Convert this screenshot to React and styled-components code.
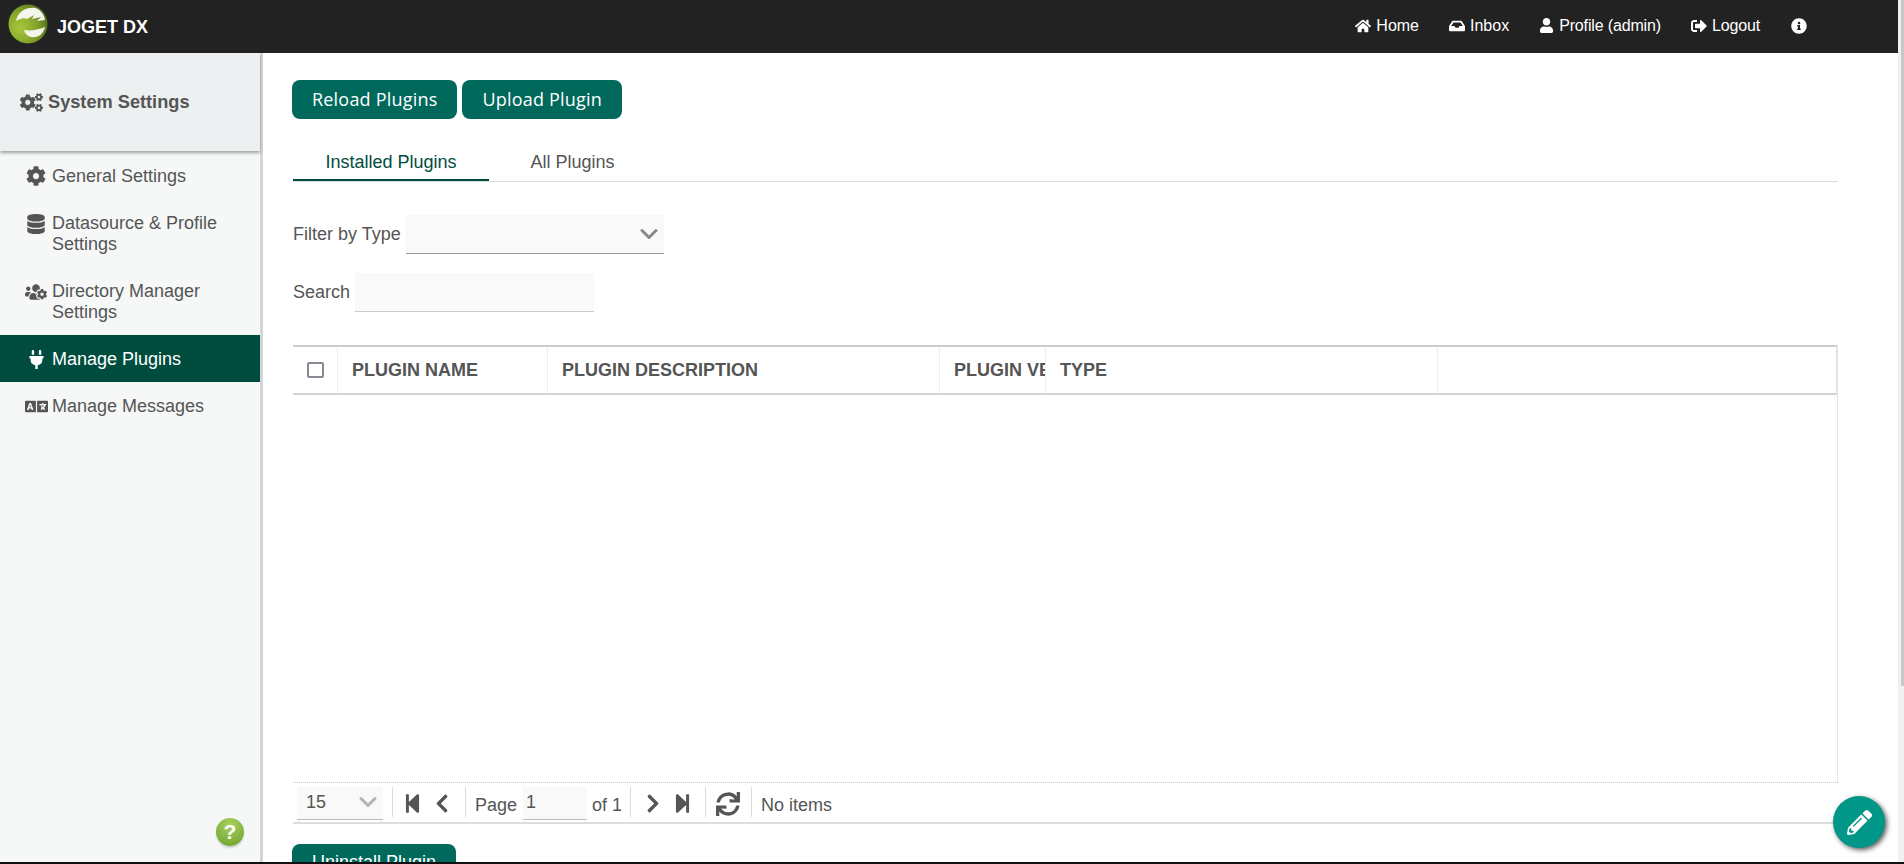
import React from 'react';
import styled, { createGlobalStyle } from 'styled-components';
import {
  FaCogs, FaCog, FaDatabase, FaUsersCog, FaPlug, FaLanguage, FaHome, FaInbox, FaUser,
  FaSignOutAlt, FaInfoCircle, FaPencilAlt, FaStepBackward, FaStepForward, FaChevronLeft,
  FaChevronRight, FaSync,
} from 'react-icons/fa';
import { FiChevronDown } from 'react-icons/fi';

const GlobalStyle = createGlobalStyle`
  html, body { margin: 0; height: 100%; overflow: hidden; background: #fff; }
  * { box-sizing: border-box; }
  body { font-family: 'Liberation Sans', Arial, sans-serif; color: #555; }
`;

const Page = styled.div`
  height: 864px;
  display: flex;
  flex-direction: column;
  border-bottom: 2px solid #111;
  overflow: hidden;
`;

const Viewport = styled.div`
  flex: 1;
  min-height: 0;
  display: flex;
`;

const Column = styled.div`
  flex: 1;
  min-width: 0;
  display: flex;
  flex-direction: column;
`;

const ScrollTrack = styled.div`
  width: 6px;
  background: #f0f0f0;
`;

const ScrollThumb = styled.div`
  width: 3px;
  height: 686px;
  margin-left: 3px;
  background: #c8c8c8;
`;

const TopBar = styled.header`
  height: 53px;
  flex: none;
  background: #222;
  display: flex;
  align-items: center;
  color: #fff;
  padding: 0 0 0 8px;
`;

const LogoWrap = styled.span`
  display: flex;
  margin-top: -6px;
`;

const BrandName = styled.span`
  font-size: 18px;
  font-weight: 700;
  margin-left: 9px;
  position: relative;
  top: 1px;
`;

const TopNav = styled.nav`
  margin-left: auto;
  margin-right: 91px;
  display: flex;
  align-items: center;
  height: 100%;
  position: relative;
  top: -1px;
`;

const TopLink = styled.a`
  display: flex;
  align-items: center;
  gap: 5px;
  font-size: 16px;
  color: #fff;
  margin-left: ${({ $gap }) => $gap}px;
  letter-spacing: ${({ $tight }) => ($tight ? '-0.15px' : '0')};
  svg { font-size: ${({ $icon }) => $icon || 16}px; }
`;

const Body = styled.div`
  flex: 1;
  min-height: 0;
  display: flex;
`;

const Sidebar = styled.aside`
  width: 263px;
  flex: none;
  background: #f6f8f8;
  border-right: 3px solid #d4d6d6;
  position: relative;
`;

const SideHead = styled.div`
  height: 98px;
  background: #ecf0f1;
  box-shadow: 0 2px 3px rgba(0, 0, 0, 0.35);
  display: flex;
  align-items: center;
  padding-left: 20px;
  gap: 5px;
  font-size: 18.2px;
  font-weight: 700;
  color: #555;
  margin-bottom: 1px;
  svg { font-size: 23px; }
`;

const SideItem = styled.a`
  display: flex;
  align-items: ${({ $multi }) => ($multi ? 'flex-start' : 'center')};
  padding: ${({ $multi }) => ($multi ? '14px 30px 12px 24px' : '1px 30px 0 24px')};
  height: ${({ $multi }) => ($multi ? 'auto' : '47px')};
  font-size: 18px;
  line-height: 21px;
  background: ${({ $active }) => ($active ? '#004d40' : 'transparent')};
  color: ${({ $active }) => ($active ? '#fff' : '#555')};
`;

const SideIcon = styled.span`
  width: 24px;
  flex: none;
  margin-right: 4px;
  display: flex;
  justify-content: center;
  font-size: ${({ $size }) => $size || 20}px;
  padding-top: ${({ $top }) => $top || 0}px;
`;

const HelpBadge = styled.div`
  position: absolute;
  left: 216px;
  top: 765px;
  width: 28px;
  height: 28px;
  border-radius: 50%;
  background: radial-gradient(circle at 50% 25%, #a9d25f, #6a9f2a);
  box-shadow: 0 2px 2px rgba(0, 0, 0, 0.15);
  color: #fff;
  font-size: 21px;
  font-weight: 700;
  text-align: center;
  line-height: 28px;
`;

const Main = styled.main`
  flex: 1;
  min-width: 0;
  padding: 27px 60px 0 30px;
  overflow: hidden;
`;

const Button = styled.button`
  height: 39px;
  padding: 0 20px 2px;
  border: 0;
  border-radius: 8px;
  background: #00695c;
  color: #fff;
  font-family: ${({ $plain }) => ($plain ? "'Liberation Sans', sans-serif" : "'Open Sans', sans-serif")};
  font-size: 18px;
  letter-spacing: ${({ $plain }) => ($plain ? '0' : '0.2px')};
  margin: 0 5px 0 -1px;
  & + & { margin-left: 0; }
`;

const Tabs = styled.div`
  display: flex;
  margin-top: 25px;
  border-bottom: 1px solid #ddd;
  height: 38px;
`;

const Tab = styled.div`
  width: ${({ $w }) => $w}px;
  height: 37px;
  text-align: center;
  font-size: 18px;
  line-height: 37px;
  color: ${({ $active }) => ($active ? '#004d40' : '#555')};
  border-bottom: ${({ $active }) => ($active ? '2px solid #004d40' : '0')};
`;

const FilterRow = styled.div`
  display: flex;
  align-items: center;
  gap: 5px;
  font-size: 18px;
  margin-top: ${({ $top }) => $top}px;
`;

const Field = styled.div`
  width: ${({ $w }) => $w}px;
  height: 39px;
  background: #f9f9f9;
  border-bottom: 1px solid ${({ $dark }) => ($dark ? '#999' : '#ccc')};
  display: flex;
  align-items: center;
  justify-content: flex-end;
  padding-right: 1px;
  color: #888;
  font-size: 28px;
  svg { stroke-width: 2.6; }
`;

const Table = styled.div`
  margin-top: 33px;
  border-right: 1px dotted #ccc;
  height: 437px;
  display: flex;
  flex-direction: column;
`;

const HeadRow = styled.div`
  display: grid;
  grid-template-columns: 45px 210px 392px 106px 392px 1fr;
  height: 50px;
  border-top: 2px solid #ccc;
  border-bottom: 2px solid #d4d4d4;
  border-right: 1px solid #ddd;
`;

const HeadCell = styled.div`
  border-right: 1px solid #eee;
  padding-left: 14px;
  font-size: 18px;
  font-weight: 700;
  color: #555;
  line-height: 47px;
  white-space: nowrap;
  overflow: hidden;
  &:last-child { border-right: 0; }
`;

const CheckCell = styled.div`
  border-right: 1px solid #eee;
  display: flex;
  align-items: center;
  justify-content: center;
`;

const CheckBox = styled.span`
  width: 17px;
  height: 16px;
  border: 2px solid #8a8a96;
  border-radius: 2px;
`;

const Pager = styled.div`
  height: 42px;
  border-top: 1px dotted #ccc;
  border-bottom: 2px solid #ddd;
  display: flex;
  align-items: center;
  padding: 6px 0 0 4px;
  font-size: 18px;
  color: #555;
`;

const PageSize = styled.div`
  width: 86px;
  height: 33px;
  margin-top: -4px;
  background: #f9f9f9;
  border-bottom: 1px solid #bbb;
  display: flex;
  align-items: center;
  justify-content: space-between;
  padding: 0 1px 2px 9px;
  svg { font-size: 28px; color: #b4b4b4; stroke-width: 2.6; }
`;

const Divider = styled.span`
  width: 1px;
  height: 30px;
  margin-top: -7px;
  background: #ddd;
  margin-left: ${({ $left }) => $left ?? 9}px;
  margin-right: ${({ $right }) => $right ?? 10}px;
`;

const PagerIcon = styled.span`
  display: flex;
  width: ${({ $w }) => $w}px;
  justify-content: center;
  margin-top: -4px;
  margin-right: ${({ $right }) => $right || 0}px;
  font-size: ${({ $size }) => $size}px;
`;

const PageInput = styled.div`
  width: 64px;
  height: 33px;
  margin: -4px 5px 0 6px;
  background: #f9f9f9;
  border-bottom: 1px solid #bbb;
  padding: 0 3px 2px;
  display: flex;
  align-items: center;
`;

const BottomBar = styled.div`
  margin-top: 20px;
`;

const Fab = styled.div`
  position: absolute;
  left: 1833px;
  top: 796px;
  width: 52px;
  height: 52px;
  border-radius: 50%;
  background: #009688;
  box-shadow: 2px 2px 5px rgba(0, 0, 0, 0.65);
  color: #fff;
  display: flex;
  align-items: center;
  justify-content: center;
  font-size: 25px;
`;

const Logo = () => (
  <svg width="40" height="40" viewBox="0 0 40 40">
    <defs>
      <radialGradient id="lg" cx="0.3" cy="0.6" r="0.85">
        <stop offset="0" stopColor="#a9c83c" />
        <stop offset="0.55" stopColor="#7ea028" />
        <stop offset="1" stopColor="#3f5a14" />
      </radialGradient>
    </defs>
    <circle cx="20" cy="20" r="19.5" fill="url(#lg)" />
    <path d="M8 17C10 7 19 3 27 4c5 1 9 6 10 12l-8 1 4-4-9 2 2-4-7 4c-4-2-7 0-11 2z" fill="#f4f6ec" />
    <path d="M16 26c6 1 14 0 21-3-1 5-5 10-11 10-5 1-9-3-10-7z" fill="#f4f6ec" />
  </svg>
);

const App = () => (
  <Page>
    <GlobalStyle />
    <Viewport>
      <Column>
        <TopBar>
          <LogoWrap><Logo /></LogoWrap>
          <BrandName>JOGET DX</BrandName>
          <TopNav>
            <TopLink $gap={0}><FaHome />Home</TopLink>
            <TopLink $gap={30}><FaInbox />Inbox</TopLink>
            <TopLink $gap={30} $icon={15} $tight><FaUser />Profile (admin)</TopLink>
            <TopLink $gap={30} $tight><FaSignOutAlt />Logout</TopLink>
            <TopLink $gap={31}><FaInfoCircle /></TopLink>
          </TopNav>
        </TopBar>
        <Body>
          <Sidebar>
            <SideHead><FaCogs />System Settings</SideHead>
            <SideItem><SideIcon><FaCog /></SideIcon>General Settings</SideItem>
            <SideItem $multi><SideIcon $top={1}><FaDatabase /></SideIcon><span>Datasource &amp; Profile Settings</span></SideItem>
            <SideItem $multi><SideIcon $size={22}><FaUsersCog /></SideIcon><span>Directory Manager Settings</span></SideItem>
            <SideItem $active><SideIcon $size={19}><FaPlug /></SideIcon>Manage Plugins</SideItem>
            <SideItem><SideIcon $size={23}><FaLanguage /></SideIcon>Manage Messages</SideItem>
            <HelpBadge>?</HelpBadge>
          </Sidebar>
          <Main>
            <Button>Reload Plugins</Button>
            <Button>Upload Plugin</Button>
            <Tabs>
              <Tab $active $w={196}>Installed Plugins</Tab>
              <Tab $w={167}>All Plugins</Tab>
            </Tabs>
            <FilterRow $top={33}>
              Filter by Type
              <Field $w={258} $dark><FiChevronDown /></Field>
            </FilterRow>
            <FilterRow $top={19}>
              Search
              <Field $w={239} />
            </FilterRow>
            <Table>
              <HeadRow>
                <CheckCell><CheckBox /></CheckCell>
                <HeadCell>PLUGIN NAME</HeadCell>
                <HeadCell>PLUGIN DESCRIPTION</HeadCell>
                <HeadCell>PLUGIN VERSION</HeadCell>
                <HeadCell>TYPE</HeadCell>
                <HeadCell />
              </HeadRow>
            </Table>
            <Pager>
              <PageSize>15<FiChevronDown /></PageSize>
              <Divider />
              <PagerIcon $w={19} $size={21} $right={12}><FaStepBackward /></PagerIcon>
              <PagerIcon $w={16} $size={21}><FaChevronLeft /></PagerIcon>
              <Divider $left={15} $right={9} />
              Page
              <PageInput>1</PageInput>
              of 1
              <Divider $left={8} $right={14} />
              <PagerIcon $w={16} $size={21} $right={12}><FaChevronRight /></PagerIcon>
              <PagerIcon $w={19} $size={21}><FaStepForward /></PagerIcon>
              <Divider $left={13} />
              <PagerIcon $w={24} $size={24}><FaSync /></PagerIcon>
              <Divider $left={11} $right={9} />
              No items
            </Pager>
            <BottomBar>
              <Button $plain>Uninstall Plugin</Button>
            </BottomBar>
          </Main>
        </Body>
      </Column>
      <ScrollTrack><ScrollThumb /></ScrollTrack>
    </Viewport>
    <Fab><FaPencilAlt /></Fab>
  </Page>
);

export default App;
